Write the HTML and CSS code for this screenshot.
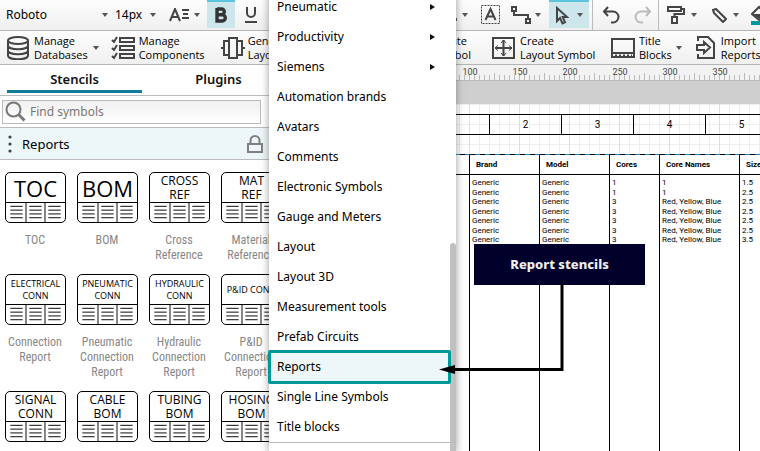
FILE: index.html
```html
<!DOCTYPE html>
<html lang="en">
<head>
<meta charset="utf-8">
<title>Report stencils</title>
<link rel="stylesheet" href="styles.css">
</head>
<body>
<svg class="defs" aria-hidden="true">
  <symbol id="report-grid" viewBox="0 0 59 20">
    <path d="M19.5 0v20M39.5 0v20M3 3.5h13M3 7.5h13M3 11.5h13M3 15.5h13M23 3.5h13M23 7.5h13M23 11.5h13M23 15.5h13M43 3.5h13M43 7.5h13M43 11.5h13M43 15.5h13" stroke="#000" fill="none"/>
  </symbol>
</svg>
<div class="app">
  <header>
    <div class="bar format">
      <div class="side">
        <button class="font">Roboto<i class="caret"></i></button>
        <button class="size">14px<i class="caret"></i></button>
        <button class="spacing" aria-label="Text style"><svg width="22" height="14" viewBox="0 0 22 14" fill="none" stroke="#444" stroke-width="2"><path d="M1 13L6 1L11 13M3 9h6M13 2h7M14 6h5M13 10h7"/></svg><i class="caret"></i></button>
        <button class="bold active" aria-label="Bold"><svg width="14" height="16" viewBox="0 0 14 16" fill="none" stroke="#333" stroke-width="3.4"><path d="M3 2h4.500a2.700 2.700 0 0 1 0 5.600H3M3 7.800h5.200a3 3 0 0 1 0 6.200H3zM3 1v14"/></svg></button>
        <button class="underline" aria-label="Underline"><svg width="14" height="16" viewBox="0 0 14 16" fill="none" stroke="#444" stroke-width="2"><path d="M3 0v6a4 4 0 0 0 8 0V0M1 15h12"/></svg></button>
      </div>
      <div class="tools">
        <button class="t-line" aria-label="Line"><svg width="3" height="12" viewBox="0 0 3 12"><path d="M0 9h2v3H0z" fill="#444"/></svg><i class="caret"></i></button>
        <button class="t-text" aria-label="Text box"><svg width="20" height="20" viewBox="0 0 20 20" fill="none" stroke="#444"><path d="M.5.5h18v18H.5z" stroke-dasharray="2 1"/><path d="M4.500 15L9.500 4L14.500 15M6.500 11.500h6" stroke-width="2"/></svg></button>
        <button class="t-conn" aria-label="Connector"><svg width="20" height="18" viewBox="0 0 20 18" fill="none" stroke="#444" stroke-width="2"><path d="M1 1h4v4H1zM15 13h4v4h-4zM3 5v4h14v4"/></svg><i class="caret"></i></button>
        <button class="t-select active" aria-label="Select"><svg width="14" height="19" viewBox="0 0 14 19" fill="none" stroke="#444" stroke-width="2"><path d="M2 2v13l3-3 2.500 5.500 2.500-1.200L7.700 11H12z"/></svg><i class="caret"></i></button>
        <button class="t-undo" aria-label="Undo"><svg width="20" height="18" viewBox="0 0 20 18" fill="none" stroke="#444" stroke-width="2"><path d="M6 1L2 5.500L6 10M2 5.500h9a5.500 5.500 0 0 1 0 11H9"/></svg></button>
        <button class="t-redo" aria-label="Redo"><svg width="20" height="18" viewBox="0 0 20 18" fill="none" stroke="#bbb" stroke-width="2"><path d="M14 1L18 5.500L14 10M18 5.500H9a5.500 5.500 0 0 0 0 11h2"/></svg></button>
        <button class="t-paint" aria-label="Format painter"><svg width="18" height="18" viewBox="0 0 18 18" fill="none" stroke="#444" stroke-width="2"><path d="M1 1h13v4H1zM14 3h3v5H7.500v2M5 11h5v6H5z"/></svg><i class="caret"></i></button>
        <button class="t-pen" aria-label="Line colour"><svg width="15" height="15" viewBox="0 0 15 15" fill="none" stroke="#444" stroke-width="2"><path d="M1 2l3-1 10 10-3 3L2 5z"/></svg><i class="caret"></i></button>
        <button class="t-fill" aria-label="Fill colour"><svg width="20" height="20" viewBox="0 0 20 20"><path d="M1 9L8 2l7 7-7 6z" fill="none" stroke="#444" stroke-width="2"/><path d="M2 9h12l-6 5z" fill="#444"/><path d="M0 16h20v4H0z" fill="#009a9a"/></svg></button>
      </div>
    </div>
    <div class="bar manage">
      <div class="side">
        <button class="m-db"><svg width="22" height="24" viewBox="0 0 22 24" fill="none" stroke="#444" stroke-width="2"><ellipse cx="11" cy="4.500" rx="10" ry="3.500"/><path d="M1 4.500v15c0 5 20 5 20 0v-15M1 9.500c0 5 20 5 20 0M1 14.500c0 5 20 5 20 0"/></svg><span>Manage<br>Databases</span><i class="caret"></i></button>
        <button class="m-comp"><svg width="24" height="24" viewBox="0 0 24 24" fill="none" stroke="#444" stroke-width="2"><path d="M9 2h14v4H9zM9 10h14v4H9zM9 18h14v4H9zM1 4l2 2 3-5M1 12l2 2 3-5M1 20l2 2 3-5"/></svg><span>Manage<br>Components</span></button>
        <button class="m-gen"><svg width="24" height="24" viewBox="0 0 24 24" fill="none" stroke="#444" stroke-width="2"><path d="M3 5h5v14H3zM8 2h8v20H8zM16 5h5v14h-5zM0 12h3M21 12h3"/></svg><span>Generate<br>Layout</span></button>
      </div>
      <div class="tools">
        <button class="m-sym"><span>Create<br>Symbol</span></button>
        <button class="m-lay"><svg width="23" height="22" viewBox="0 0 23 22" fill="none" stroke="#444" stroke-width="2"><path d="M1 1h21v20H1zM11.500 3v16M3 11h17"/><path d="M9 6l2.500-3L14 6M9 16l2.500 3 2.500-3M6 8.500L3 11l3 2.500M17 8.500l3 2.500-3 2.500" stroke-width="1"/></svg><span>Create<br>Layout Symbol</span></button>
        <button class="m-title"><svg width="24" height="20" viewBox="0 0 24 20" fill="none" stroke="#444" stroke-width="2"><path d="M1 1h22v18H1zM1 15h22"/><path d="M4 17.500h17" stroke-dasharray="2 2"/></svg><span>Title<br>Blocks</span><i class="caret"></i></button>
        <button class="m-import"><svg width="20" height="24" viewBox="0 0 20 24" fill="none" stroke="#444" stroke-width="2"><path d="M2 5V1h10l6 6v15H2v-4M1 9h7V6l6 5.500L8 17v-3H1z"/></svg><span>Import<br>Reports</span></button>
      </div>
    </div>
  </header>
  <div class="body">
    <aside class="panel">
      <nav class="tabs"><a class="on" href="#stencils">Stencils</a><a href="#plugins">Plugins</a></nav>
      <label class="search"><svg width="22" height="22" viewBox="0 0 22 22" fill="none" stroke="#777"><circle cx="8.500" cy="8.500" r="7" stroke-width="2"/><path d="M13.500 13.500l6 6" stroke-width="3"/></svg><input type="text" placeholder="Find symbols" aria-label="Find symbols"></label>
      <div class="group"><svg width="4" height="18" viewBox="0 0 4 18" fill="#444"><circle cx="2" cy="2" r="1.600"/><circle cx="2" cy="9" r="1.600"/><circle cx="2" cy="16" r="1.600"/></svg><h2>Reports</h2><svg width="16" height="18" viewBox="0 0 16 18" fill="none" stroke="#808080" stroke-width="2"><path d="M1 9h14v8H1zM3.500 9V5.500a4.500 4.500 0 0 1 9 0V9"/></svg></div>
      <div class="stencils">
        <figure><div class="card xl"><b>TOC</b><svg><use href="#report-grid"/></svg></div><figcaption>TOC</figcaption></figure>
        <figure><div class="card xl"><b>BOM</b><svg><use href="#report-grid"/></svg></div><figcaption>BOM</figcaption></figure>
        <figure><div class="card"><b>CROSS<br>REF</b><svg><use href="#report-grid"/></svg></div><figcaption>Cross Reference</figcaption></figure>
        <figure><div class="card"><b>MAT<br>REF</b><svg><use href="#report-grid"/></svg></div><figcaption>Material Reference</figcaption></figure>
        <figure><div class="card sm"><b>ELECTRICAL<br>CONN</b><svg><use href="#report-grid"/></svg></div><figcaption>Connection Report</figcaption></figure>
        <figure><div class="card sm"><b>PNEUMATIC<br>CONN</b><svg><use href="#report-grid"/></svg></div><figcaption>Pneumatic Connection Report</figcaption></figure>
        <figure><div class="card sm"><b>HYDRAULIC<br>CONN</b><svg><use href="#report-grid"/></svg></div><figcaption>Hydraulic Connection Report</figcaption></figure>
        <figure><div class="card sm"><b>P&amp;ID CONN</b><svg><use href="#report-grid"/></svg></div><figcaption>P&amp;ID Connection Report</figcaption></figure>
        <figure><div class="card"><b>SIGNAL<br>CONN</b><svg><use href="#report-grid"/></svg></div></figure>
        <figure><div class="card"><b>CABLE<br>BOM</b><svg><use href="#report-grid"/></svg></div></figure>
        <figure><div class="card"><b>TUBING<br>BOM</b><svg><use href="#report-grid"/></svg></div></figure>
        <figure><div class="card"><b>HOSING<br>BOM</b><svg><use href="#report-grid"/></svg></div></figure>
      </div>
    </aside>
    <main class="canvas">
      <div class="ruler"><span>100</span><span>150</span><span>200</span><span>250</span><span>300</span><span>350</span></div>
      <div class="sheet">
        <div class="zones"><span></span><span>2</span><span>3</span><span>4</span><span>5</span></div>
        <table>
          <colgroup><col class="c-name"><col class="c-brand"><col class="c-brand"><col class="c-cores"><col class="c-cnames"><col></colgroup>
          <thead><tr><th></th><th>Brand</th><th>Model</th><th>Cores</th><th>Core Names</th><th>Size</th></tr></thead>
          <tbody>
            <tr><td></td><td>Generic</td><td>Generic</td><td>1</td><td>1</td><td>1.5</td></tr>
            <tr><td></td><td>Generic</td><td>Generic</td><td>1</td><td>1</td><td>2.5</td></tr>
            <tr><td></td><td>Generic</td><td>Generic</td><td>3</td><td>Red, Yellow, Blue</td><td>2.5</td></tr>
            <tr><td></td><td>Generic</td><td>Generic</td><td>3</td><td>Red, Yellow, Blue</td><td>2.5</td></tr>
            <tr><td></td><td>Generic</td><td>Generic</td><td>3</td><td>Red, Yellow, Blue</td><td>2.5</td></tr>
            <tr><td></td><td>Generic</td><td>Generic</td><td>3</td><td>Red, Yellow, Blue</td><td>2.5</td></tr>
            <tr><td></td><td>Generic</td><td>Generic</td><td>3</td><td>Red, Yellow, Blue</td><td>3.5</td></tr>
          </tbody>
          <tfoot><tr><td></td><td></td><td></td><td></td><td></td><td></td></tr></tfoot>
        </table>
      </div>
    </main>
  </div>
  <div class="menu" role="menu">
    <button class="sub">Pneumatic</button>
    <button class="sub">Productivity</button>
    <button class="sub">Siemens</button>
    <button>Automation brands</button>
    <button>Avatars</button>
    <button>Comments</button>
    <button>Electronic Symbols</button>
    <button>Gauge and Meters</button>
    <button>Layout</button>
    <button>Layout 3D</button>
    <button>Measurement tools</button>
    <button>Prefab Circuits</button>
    <button class="chosen">Reports</button>
    <button>Single Line Symbols</button>
    <button>Title blocks</button>
    <hr>
    <div class="thumb"></div>
  </div>
  <div class="callout">Report stencils</div>
  <svg class="arrow" width="126" height="92" viewBox="0 0 126 92"><path d="M123 0v85.500H12" fill="none" stroke="#000" stroke-width="3"/><path d="M0 85.500L16 81v9z"/></svg>
</div>
</body>
</html>
```
FILE: styles.css
```css
* { box-sizing: border-box; }
body { margin: 0; font: 12px/18px "Noto Sans", "Open Sans", sans-serif; color: #000; background: #fff; }
button { display: flex; align-items: center; padding: 0; border: 0; background: none; font: inherit; color: inherit; text-align: left; white-space: nowrap; }
svg { display: block; flex: none; }
.defs { position: absolute; width: 0; height: 0; }
.app { position: relative; display: flex; flex-direction: column; height: 100vh; overflow: hidden; }

.bar { display: flex; border-bottom: 1px solid #b5b5b5; background: linear-gradient(#fdfdfd, #f0f0f0); overflow: hidden; }
.format { height: 31px; }
.manage { height: 34px; font: 11px/14px "Open Sans", "Noto Sans", sans-serif; }
.side { display: flex; flex: 0 0 455px; overflow: hidden; }
.tools { display: flex; flex: 1; min-width: 0; overflow: hidden; }
.bar button { flex: none; }
.caret { flex: none; width: 0; border: 3px solid transparent; border-top: 4px solid #555; border-bottom: 0; }
.bar .active { height: 28px; border-top: 2px solid #5bc4de; background: #cde6eb; }

.font { width: 102px; margin-left: 6px; justify-content: space-between; }
.size { width: 41px; margin-left: 7px; justify-content: space-between; }
.spacing { gap: 3px; margin-left: 13px; }
.bold { width: 28px; margin-left: 7px; justify-content: center; }
.underline { margin-left: 9px; }

.t-line { gap: 4px; }
.t-text { margin-left: 13px; }
.t-conn { gap: 4px; margin-left: 10px; }
.t-select { width: 40px; margin-left: 8px; gap: 8px; justify-content: center; }
.bar .t-undo { margin-left: 3px; padding: 0 10px 0 9px; border-left: 1px solid #bbb; }
.t-redo { padding-right: 6px; }
.bar .t-paint { gap: 6px; padding-left: 8px; border-left: 1px solid #bbb; }
.t-pen { gap: 6px; margin-left: 15px; }
.t-fill { margin-left: 12px; }

.m-db { margin-left: 7px; gap: 5px; }
.m-comp { width: 96px; margin-left: 12px; gap: 4px; }
.m-gen { margin-left: 14px; gap: 3px; }
.m-sym { width: 16px; justify-content: flex-end; }
.m-lay { width: 104px; margin-left: 21px; gap: 5px; }
.m-title { margin-left: 15px; gap: 4px; }
.m-import { margin-left: 14px; gap: 5px; }

.body { display: flex; flex: 1; min-height: 0; }
.panel { flex: 0 0 290px; overflow: hidden; }
.tabs { display: grid; grid-template-columns: 1fr 1fr; gap: 9px; height: 31px; padding: 0 4px 0 7px; border-bottom: 1px solid #bbb; }
.tabs a { height: 28px; border-bottom: 3px solid transparent; font-size: 13px; font-weight: 600; line-height: 28px; color: #111; text-align: center; text-decoration: none; }
.tabs .on { border-color: #117b9c; }
.search { display: flex; align-items: center; gap: 3px; height: 24px; margin: 4px 29px 3px 2px; padding-left: 2px; border: 1px solid #bbb; background: linear-gradient(#f0f0f0, #fff); }
.search input { flex: 1; min-width: 0; padding: 0; border: 0; outline: 0; background: none; font: inherit; }
.search input::placeholder { color: #777; }
.group { display: flex; align-items: center; height: 33px; padding: 0 27px 0 8px; border: solid #bbb; border-width: 1px 0; background: #edf6f8; }
.group h2 { flex: 1; margin: 0 0 0 10px; font-size: 13px; font-weight: 400; }

.stencils { display: grid; grid-template-columns: repeat(4, 72px); grid-template-rows: 102px 117px auto; padding-top: 12px; }
figure { margin: 0; width: 70px; }
.card { display: grid; grid-template-rows: 29px 20px; width: 61px; margin-left: 5px; border: 1px solid #000; border-radius: 5px; overflow: hidden; }
.card b { display: grid; place-items: center; place-content: center; font: 12px/14px "Open Sans", sans-serif; text-align: center; white-space: nowrap; }
.card svg { width: 59px; height: 20px; border-top: 1px solid #000; }
.card.xl b { font-size: 22px; }
.card.sm b { font-size: 9px; line-height: 12px; }
figcaption { margin-top: 10px; font: 12px/15px "Roboto Condensed", Roboto, sans-serif; color: #888; text-align: center; }

.canvas { display: flex; flex: 1; flex-direction: column; min-width: 0; overflow: hidden; }
.ruler { display: flex; flex: none; height: 16px; padding-left: 155px; border-bottom: 1px solid #bbb; font: 9px/14px Roboto, sans-serif; color: #444; background: repeating-linear-gradient(90deg, #bbb 0 1px, transparent 1px 5px) 4px 100% / 100% 5px no-repeat, repeating-linear-gradient(90deg, #bbb 0 1px, transparent 1px 50px) 4px 100% / 100% 7px no-repeat, #f3f3f3; }
.ruler span { flex: 0 0 50px; text-align: center; }
.sheet { flex: 1; min-height: 0; overflow: hidden; border-top: 23px solid #cfcfcf; background: repeating-linear-gradient(90deg, #ddd 0 1px, transparent 1px 50px) 29px 0, repeating-linear-gradient(90deg, #eee 0 1px, transparent 1px 10px) 9px 0, repeating-linear-gradient(#eee 0 1px, transparent 1px 10px); }
.zones { display: grid; grid-template-columns: 199px repeat(4, 72px); height: 21px; margin: 10px 0 19px; border: solid #000; border-width: 1px 0; font: 10px/19px Roboto, sans-serif; }
.zones span { text-align: center; border-left: 1px solid #000; }

table { width: 100%; table-layout: fixed; border-spacing: 0; background: repeating-linear-gradient(90deg, #000 0 5px, #0a84c8 5px 10px) 0 0 / 100% 1px no-repeat, #fff; font: 8px/9px Roboto, sans-serif; white-space: nowrap; }
.c-name { width: 179px; }
.c-brand { width: 70px; }
.c-cores { width: 50px; }
.c-cnames { width: 80px; }
th, td { height: 9px; padding: 0 0 0 2px; border-left: 1px solid #000; text-align: left; }
tbody tr:nth-child(even) td { height: 10px; }
th { height: 21px; padding-left: 6px; border-bottom: 1px solid #000; }
tbody tr:first-child td { height: 12px; padding-top: 3px; }
tfoot td { height: 100vh; }

.menu { position: absolute; z-index: 1; top: -8px; left: 269px; width: 187px; height: 460px; background: #fff; box-shadow: 0 0 8px #4448; }
.menu button { width: 181px; height: 30px; padding: 0 15px 0 8px; }
.menu .sub { justify-content: space-between; }
.sub::after { content: ""; border: 3px solid transparent; border-left: 5px solid #111; border-right: 0; }
.menu .chosen { width: 183px; height: 34px; margin: -2px 0 -2px -1px; border: 3px solid #009999; border-radius: 2px; padding-left: 6px; background: #edf6f8; }
.menu hr { height: 1px; margin: 0; border: 0; background: #bbb; }
.thumb { position: absolute; top: 251px; right: 0; bottom: 0; width: 6px; border-radius: 3px 3px 0 0; background: #c0c0c0; z-index: -1; }
.callout { position: absolute; z-index: 2; top: 244px; left: 474px; width: 171px; height: 41px; background: #00002b; color: #eee; font: 800 13px/41px "Noto Sans", sans-serif; text-align: center; }
.arrow { position: absolute; z-index: 2; top: 284px; left: 439px; }
```
